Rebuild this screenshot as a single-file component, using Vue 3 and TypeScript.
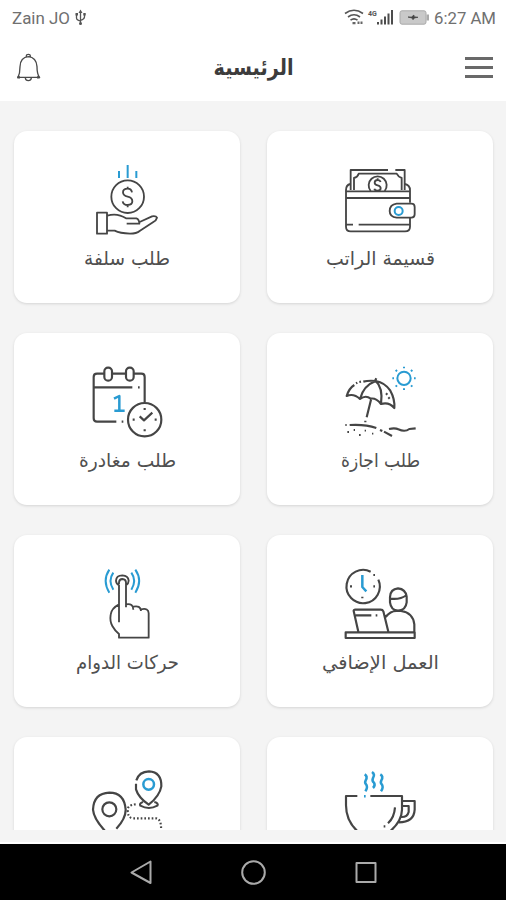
<script setup lang="ts">
interface Tile {
  id: string
  label: string
  width: number
  center: number
  viewBox: string
}

// center is the label's middle inside the 226px wide card
const tiles: Tile[] = [
  { id: 'advance', label: 'طلب سلفة', width: 86, center: 113, viewBox: '51 15 240 240' },
  { id: 'salary', label: 'قسيمة الراتب', width: 109, center: 113.5, viewBox: '75 15 240 240' },
  { id: 'permission', label: 'طلب مغادرة', width: 97, center: 113.5, viewBox: '51 15 240 240' },
  { id: 'vacation', label: 'طلب اجازة', width: 79, center: 113.5, viewBox: '75 15 240 240' },
  { id: 'attendance', label: 'حركات الدوام', width: 103, center: 113.5, viewBox: '51 12 240 240' },
  { id: 'overtime', label: 'العمل الإضافي', width: 117, center: 113.5, viewBox: '90 12 240 240' },
  { id: 'trips', label: '', width: 0, center: 113, viewBox: '51 18 240 240' },
  { id: 'break', label: '', width: 0, center: 113, viewBox: '60 18 240 240' },
]
</script>

<template>
  <div class="screen">
    <div class="status">
      <svg class="carrier" width="90" height="36" viewBox="0 0 90 36">
        <text x="12" y="24" textLength="58" lengthAdjust="spacingAndGlyphs">Zain JO</text>
        <g fill="none" stroke="#555" stroke-width="1.3">
          <path d="M80.5 12v12M76.5 14v4q0 2 4 3M84.500 14v3q0 2-4 3.500" />
        </g>
        <path d="M78.500 13l2-3.500 2 3.500zM75.500 13h2.500v2.500h-2.500zM83.300 13h2.400v2.400h-2.400z" fill="#555" />
        <circle cx="80.500" cy="23.500" r="1.500" fill="#555" />
      </svg>
      <svg width="166" height="36" viewBox="340 0 166 36">
        <g fill="none" stroke="#555" stroke-width="1.6">
          <path d="M345 13.500Q354 7 363 13.500M348 17Q354 12.500 360 17M350.500 20.200Q354 17.500 357.500 20.200" />
        </g>
        <path d="M352.500 22h3v2.200h-3zM357.500 21.500h2v2.500h-2zM360.500 21.500h2v2.500h-2z" fill="#666" />
        <text class="net" x="368" y="15.500">4G</text>
        <path d="M377 22h2v2.500h-2zM380.500 19.500h2v5h-2zM384 16.500h2v8h-2zM387.500 13.500h2v11h-2zM391 10h2v14.500h-2z" fill="#4c4c4c" />
        <rect x="400" y="10.800" width="26" height="13.400" rx="2" fill="#c9c9c9" stroke="#aaa" />
        <rect x="426.500" y="14.500" width="2.500" height="6" fill="#aaa" />
        <path d="M408 17h3.500l2.500-2v1.700l4 .6-3.500 .6-1.500 1.800-1-1.700z" fill="#444" stroke="#444" stroke-width=".7" />
        <text x="434" y="24" textLength="62" lengthAdjust="spacingAndGlyphs">6:27 AM</text>
      </svg>
    </div>
    <header class="bar">
      <svg width="28" height="32" viewBox="42 155 84 96" fill="none" stroke="#4a4a4a" stroke-width="4">
        <path d="M79 169v-3q0-4 6-4t6 4v3M54 231Q60 219 60 199Q61 171 85 169Q109 171 111 199Q111 219 118 231zM76 233q1 8 9 8t9-8" />
        <path d="M52 231h8M111 231h8" stroke-width="7" />
      </svg>
      <svg class="title" width="100" height="44" viewBox="0 0 100 44">
        <text x="49.500" y="28.500" text-anchor="middle" textLength="80" lengthAdjust="spacingAndGlyphs">الرئيسية</text>
      </svg>
      <div class="menu"><i /><i /><i /></div>
    </header>

    <main class="grid">
      <section v-for="tile in tiles" :key="tile.id" class="card">
        <svg class="icon" width="80" height="80" :viewBox="tile.viewBox">
          <template v-if="tile.id === 'advance'">
            <path class="blue" d="M147 48v21M173 30v39M199 48v21" />
            <circle cx="173" cy="125" r="49" />
            <path d="M186 112q-2-11-13-11-14 0-14 11 0 10 14 13t14 14q0 11-14 11-13 0-15-11M173 95v8M173 148v9" />
            <path d="M81 173h30v63H81zM112 182Q142 173 168 190H199Q208 193 208 206H170M209 201L246 184Q258 182 261 188Q259 196 250 201L210 227Q199 236 180 236Q150 235 134 227H112" />
          </template>
          <template v-else-if="tile.id === 'salary'">
            <path d="M107 105V45H219M241 45H269V105M117 105V69Q128 66 131 56H245Q250 66 260 69V105" />
            <path d="M167 108A27 27 0 1 1 209 108M197 81q-2-6-9-6-9 0-9 8 0 6 9 8t9 9q0 7-9 7-8 0-10-6M188 70v5" />
            <path d="M106 87Q93 90 93 105V215Q93 229 107 229H270Q285 229 285 215V188M270 87Q285 90 285 106V143M93 109H285M94 129H285M95 209H114M131 209H285" />
            <path d="M289 146H245Q224 149 224 168Q224 186 245 188H289Q299 188 299 178V156Q299 146 289 146z" />
            <circle class="blue" cx="251" cy="168" r="12" />
          </template>
          <template v-else-if="tile.id === 'permission'">
            <path class="heavy" d="M102 50H81Q71 50 71 60V184Q71 194 81 194H139M127 50H167M192 50H214Q224 50 224 60V135M72 91H187M204 91h5M155 194h5" />
            <rect class="heavy" x="103" y="32" width="23" height="39" rx="11" />
            <rect class="heavy" x="168" y="32" width="23" height="39" rx="11" />
            <circle class="heavy" cx="224" cy="188" r="50" />
            <path class="heavy" d="M209 178L222 190L247 167M224 153v6M224 217v6M188 188h6M254 188h6" />
            <path class="blue thick" d="M132 125L148 117V161M133 161H164" />
          </template>
          <template v-else-if="tile.id === 'vacation'">
            <path class="heavy" d="M118 84Q102 94 95 117Q116 108 135 126Q152 113 167 125Q183 122 198 141Q222 134 238 153Q240 126 226 101Q210 77 182 72Q160 70 145 74M123 79l4-2M133 75l5-1M135 126Q145 86 182 72Q205 92 198 141M180 72l4-8M168 128L155 181M151 191v5M213 109l4 4M220 121l4 4" />
            <path class="heavy" d="M91 204h4M104 204Q150 201 184 213M195 219l7 3M207 224L231 237M222 216Q240 212 250 217Q270 226 283 216L302 214" />
            <path d="M97 225h5M116 219h4M132 234h5M149 221h4M171 230h4" />
            <circle class="blue" cx="267" cy="64" r="20" />
            <path class="blue" d="M267 29v5M267 94v5M232 64h5M297 64h5M242 39l4 4M288 85l4 4M242 89l4-4M288 43l4-4" />
          </template>
          <template v-else-if="tile.id === 'attendance'">
            <path class="blue" d="M118 29Q96 62 118 98M130 38Q113 62 130 89M184 38Q201 62 184 89M196 29Q219 62 196 98" />
            <path d="M147 187V76Q138 70 138 62Q139 46 157 46Q175 47 176 62Q176 70 168 76V142M147 72V67Q148 57 157 57Q168 58 168 68V76M168 133Q190 129 190 149M190 140Q211 135 213 153M213 148Q236 143 236 160V233H147V222Q134 211 127 198Q119 184 122 164Q124 145 147 133" />
          </template>
          <template v-else-if="tile.id === 'overtime'">
            <path class="heavy" d="M182 35A50 50 0 1 0 205 59M190 45h5M157 110v5M120 79h6M190 79h5" />
            <path class="blue thick" d="M157 45V81L169 94" />
            <path class="heavy" d="M107 217H314V234H107zM145 215L131 153Q130 149 136 149H212Q218 149 220 154L235 215M137 166H184M197 166h5M227 171Q241 153 259 153H273Q309 158 313 193V216M240 111V127Q243 151 264 152Q287 151 290 127V110Q287 87 264 85Q241 87 240 111zM240 116Q270 120 290 105" />
          </template>
          <template v-else-if="tile.id === 'trips'">
            <path class="heavy" d="M198 71V88Q205 112 236 134Q269 108 274 79Q275 36 237 34Q207 35 199 61M219 126Q207 130 211 137Q237 151 262 137Q267 130 253 126" />
            <circle class="blue thick" cx="236" cy="73" r="16" />
            <path class="heavy" d="M139 206Q167 176 167 149Q163 98 118 98Q71 100 69 149Q71 177 108 216" />
            <circle class="heavy" cx="118" cy="148" r="21" />
            <path class="heavy dots" d="M197 133Q172 135 173 151Q173 174 190 175H258Q275 177 273 212V235" />
          </template>
          <template v-else>
            <path class="blue thick" d="M134 43Q144 49 137 61Q133 69 139 74Q144 83 136 94M156 36Q166 43 159 54Q155 63 162 68Q167 76 159 84M181 43Q191 49 184 61Q180 69 186 74Q191 83 183 94M132 109h5" />
            <path class="heavy" d="M112 108H78V136Q78 187 120 220H203Q245 187 246 149V108H151M247 123H284V149Q282 187 236 187M248 138H266V156Q262 172 243 171M225 142Q223 172 204 190M191 199h5" />
          </template>
        </svg>
        <svg v-if="tile.label" class="label" width="226" height="36" viewBox="0 0 226 36">
          <text
            :x="tile.center"
            y="24.500"
            text-anchor="middle"
            :textLength="tile.width"
            lengthAdjust="spacingAndGlyphs"
          >{{ tile.label }}</text>
        </svg>
      </section>
    </main>

    <nav class="nav">
      <svg width="506" height="56" viewBox="0 0 506 56" fill="none" stroke="#aaa" stroke-width="2" stroke-linejoin="round">
        <path d="M150.500 17.500V39L131.500 28.500z" />
        <circle cx="253.500" cy="28.500" r="11.300" />
        <path d="M356.500 19h19v19h-19z" />
      </svg>
    </nav>
  </div>
</template>

<style>
body {
  margin: 0;
  background: #fff;
}
</style>

<style scoped>
.screen {
  width: 506px;
  height: 900px;
  display: flex;
  flex-direction: column;
  overflow: hidden;
  background: #fff;
}
svg {
  display: block;
  flex: none;
}
.status {
  height: 36px;
  display: flex;
  justify-content: space-between;
  font: 17px Roboto, sans-serif;
}
.status text {
  fill: #707070;
}
.status .net {
  font-size: 7px;
  font-weight: 700;
  fill: #555;
}
.bar {
  height: 65px;
  box-sizing: border-box;
  padding: 0 13px 2px 14px;
  display: grid;
  grid-template-columns: 1fr 100px 1fr;
  align-items: center;
}
.title {
  font: bold 22px "DejaVu Sans", sans-serif;
}
.title text {
  fill: #3c3c3c;
}
.menu {
  justify-self: end;
  width: 28px;
  display: flex;
  flex-direction: column;
  gap: 6px;
}
.menu i {
  height: 3px;
  background: #696969;
}
.grid {
  height: 741px;
  box-sizing: border-box;
  padding: 30px 13px 0 14px;
  border-bottom: 12px solid #f4f4f4;
  background: #f4f4f4;
  display: grid;
  grid-template-columns: 226px 226px;
  grid-auto-rows: 172px;
  align-content: start;
  gap: 30px 27px;
  overflow: hidden;
  flex: none;
}
.card {
  display: flex;
  flex-direction: column;
  align-items: center;
  padding-top: 29px;
  box-sizing: border-box;
  background: #fff;
  border-radius: 13px;
  box-shadow: 0 1px 3px rgba(0, 0, 0, 0.13);
}
.icon {
  fill: none;
  stroke: #454545;
  stroke-width: 5.500;
  stroke-linecap: butt;
  stroke-linejoin: round;
}
.icon .heavy {
  stroke-width: 6.500;
}
.icon .blue {
  stroke: #299bd2;
  stroke-width: 6;
}
.icon .thick {
  stroke-width: 7.5;
}
.icon .dots {
  stroke-dasharray: 5 6;
}
.label {
  font: 19px "DejaVu Sans", sans-serif;
}
.label text {
  fill: #505050;
}
.nav {
  margin-top: 2px;
  height: 56px;
  background: #000;
  flex: none;
}
</style>
